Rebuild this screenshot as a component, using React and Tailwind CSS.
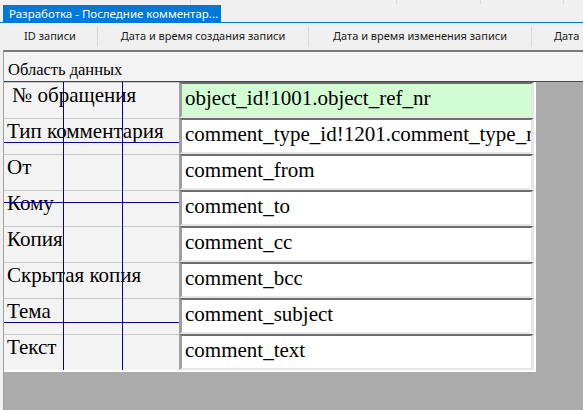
import React from "react";

const rows = [
  { label: "\u00a0№ обращения", field: "object_id!1001.object_ref_nr", green: true },
  { label: "Тип комментария", field: "comment_type_id!1201.comment_type_nr" },
  { label: "От", field: "comment_from" },
  { label: "Кому", field: "comment_to" },
  { label: "Копия", field: "comment_cc" },
  { label: "Скрытая копия", field: "comment_bcc" },
  { label: "Тема", field: "comment_subject" },
  { label: "Текст", field: "comment_text" },
];

const ui = { fontFamily: '"Noto Sans", "Liberation Sans", sans-serif' };
const serif = { fontFamily: '"Liberation Serif", "Times New Roman", serif' };

function FormRow({ label, field, green }) {
  return (
    <div className="flex h-[36px]">
      <div className="w-[175px] border-t border-[#c8c8c8] pl-[3px] text-[21px] leading-[24px] text-black whitespace-nowrap overflow-hidden">
        {label}
      </div>
      <div
        className={
          "w-[355px] border-t-2 border-t-[#6e6e6e] border-l-[3px] border-l-[#a0a0a0] border-r-[3px] border-r-[#e6e6e6] border-b-2 border-b-[#e6e6e6] pl-[3px] pt-[2px] text-[21px] leading-[24px] text-black whitespace-nowrap overflow-hidden " +
          (green ? "bg-[#d2fcd2]" : "bg-white")
        }
      >
        {field}
      </div>
    </div>
  );
}

export default function App() {
  return (
    <div className="w-[583px] h-[410px] overflow-hidden bg-[#f0f0f0] flex flex-col" style={ui}>
      {/* top strip */}
      <div className="h-[5px] flex">
        <div className="w-[190px]"></div>
        <div className="w-px h-[4px] bg-[#dadada]"></div>
        <div className="w-[205px]"></div>
        <div className="w-px h-[4px] bg-[#dadada]"></div>
        <div className="w-[83px]"></div>
        <div className="w-px h-[4px] bg-[#dadada]"></div>
        <div className="w-[82px]"></div>
        <div className="w-px h-[4px] bg-[#dadada]"></div>
      </div>

      {/* tab */}
      <div className="h-[17px] pl-[3px] flex">
        <div className="w-[218px] bg-[#0078d7] text-white text-[11.5px] leading-[17px] pl-[6px] whitespace-nowrap overflow-hidden">
          Разработка - Последние комментар...
        </div>
      </div>
      <div className="h-px bg-[#0078d7]"></div>

      {/* column headers */}
      <div className="h-[27px] flex items-center pl-[3px] text-[11px] text-[#1a1a1a] whitespace-nowrap">
        <div className="w-[94px] text-center">ID записи</div>
        <div className="w-px h-[20px] bg-[#d9d9d9]"></div>
        <div className="w-[210px] text-center">Дата и время создания записи</div>
        <div className="w-px h-[20px] bg-[#d9d9d9]"></div>
        <div className="w-[222px] text-center">Дата и время изменения записи</div>
        <div className="w-px h-[20px] bg-[#d9d9d9]"></div>
        <div className="pl-[22px]">Дата</div>
      </div>

      {/* data area */}
      <div className="flex-1 flex flex-col ml-[3px] border-l border-l-[#a0a0a0] border-t-2 border-t-[#7a7a7a] bg-[#f3f3f3]">
        <div className="h-[29px] pl-[4px] pt-[8px] text-[16.5px] leading-[19px] text-black" style={serif}>
          Область данных
        </div>
        <div className="flex-1 bg-[#ababab] border-t border-[#454545]" style={serif}>
          <div className="relative w-[532px] bg-[#f3f3f3] border-r-2 border-b-2 border-white">
            {rows.map((r) => (
              <FormRow key={r.field} {...r} />
            ))}
            {/* blue guide lines */}
            <div className="absolute left-[59px] top-0 w-px h-[288px] bg-[#0000a0]"></div>
            <div className="absolute left-[118px] top-0 w-px h-[288px] bg-[#0000a0]"></div>
            <div className="absolute left-0 top-[60px] w-[175px] h-px bg-[#0000a0]"></div>
            <div className="absolute left-0 top-[120px] w-[175px] h-px bg-[#0000a0]"></div>
            <div className="absolute left-0 top-[240px] w-[175px] h-px bg-[#0000a0]"></div>
          </div>
        </div>
      </div>
    </div>
  );
}
